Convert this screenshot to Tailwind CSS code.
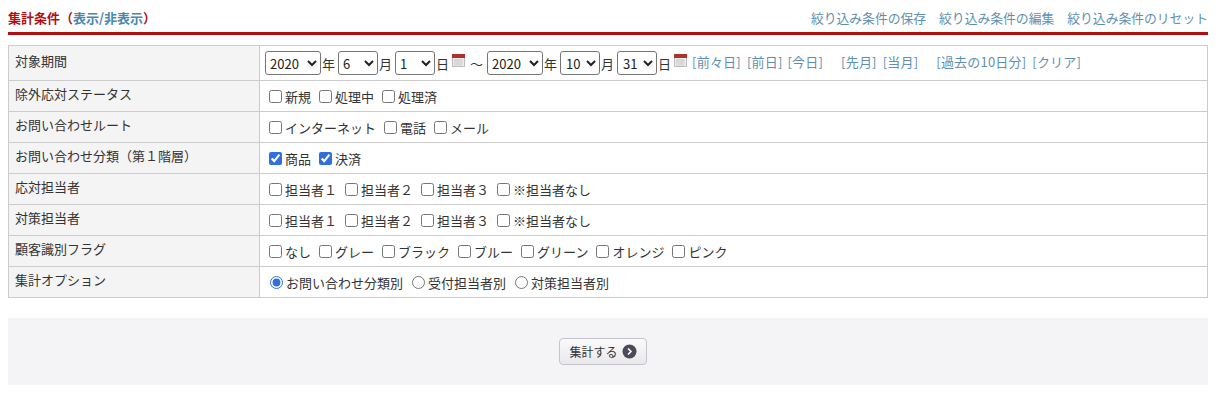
<!DOCTYPE html>
<html lang="ja">
<head>
    <meta charset="UTF-8">
    <title>集計条件</title>
    <script src="https://cdn.jsdelivr.net/npm/@tailwindcss/browser@4"></script>
</head>
<body class="bg-white text-[#333] text-[13px] leading-[19px] font-['Noto_Sans_CJK_JP','Noto_Sans',sans-serif]">
    <div class="ml-2 w-[1200px] pt-[8px]">
        <!-- header -->
        <div class="flex justify-between items-start h-[24px] border-b-[3px] border-[#b01010] box-content">
            <h2 class="font-bold text-[#b01010] text-[13px]">集計条件（<a class="text-[#4a86ad]">表示/非表示</a>）</h2>
            <div class="flex gap-[13px] text-[#5f8fb0] text-[12.8px]">
                <a>絞り込み条件の保存</a>
                <a>絞り込み条件の編集</a>
                <a>絞り込み条件のリセット</a>
            </div>
        </div>

        <table class="mt-[10px] w-[1200px] table-fixed border-collapse">
            <tbody>
                <tr class="h-[35px]">
                    <th class="w-[251px] border border-[#ccc] bg-[#f4f4f4] font-normal text-left px-[6px] align-top pt-[5px]">対象期間</th>
                    <td class="border border-[#ccc] px-[5px]">
                        <div class="flex items-center whitespace-nowrap">
                            <span class="relative inline-flex">
                                <select class="appearance-none border border-[#767676] rounded-[3px] w-[56px] h-[24px] pl-[4px] bg-white text-[#222]"><option>2020</option></select>
                                <svg class="absolute right-[4px] top-[8px] w-[10px] h-[8px]" viewBox="0 0 10 8"><path d="M1 2l4 4 4-4" fill="none" stroke="#222" stroke-width="2"/></svg>
                            </span>
                            <span class="ml-[1px]">年</span>
                            <span class="relative inline-flex ml-[3px]">
                                <select class="appearance-none border border-[#767676] rounded-[3px] w-[40px] h-[24px] pl-[4px] bg-white text-[#222]"><option>6</option></select>
                                <svg class="absolute right-[4px] top-[8px] w-[10px] h-[8px]" viewBox="0 0 10 8"><path d="M1 2l4 4 4-4" fill="none" stroke="#222" stroke-width="2"/></svg>
                            </span>
                            <span class="ml-[1px]">月</span>
                            <span class="relative inline-flex ml-[3px]">
                                <select class="appearance-none border border-[#767676] rounded-[3px] w-[40px] h-[24px] pl-[4px] bg-white text-[#222]"><option>1</option></select>
                                <svg class="absolute right-[4px] top-[8px] w-[10px] h-[8px]" viewBox="0 0 10 8"><path d="M1 2l4 4 4-4" fill="none" stroke="#222" stroke-width="2"/></svg>
                            </span>
                            <span class="ml-[1px]">日</span>
                            <svg class="ml-[3px] mb-[5px] w-[13px] h-[13px]" viewBox="0 0 13 13"><rect x="0.5" y="0.5" width="12" height="12" fill="#eee" stroke="#bbb"/><rect width="13" height="4" fill="#b03030"/><path d="M2 6h9M2 8h9M2 10h9M3 5v7M5 5v7M7 5v7M9 5v7" stroke="#c4c4c4" stroke-width="0.6"/></svg>
                            <span class="ml-[5px] mr-[4px]">～</span>
                            <span class="relative inline-flex">
                                <select class="appearance-none border border-[#767676] rounded-[3px] w-[56px] h-[24px] pl-[4px] bg-white text-[#222]"><option>2020</option></select>
                                <svg class="absolute right-[4px] top-[8px] w-[10px] h-[8px]" viewBox="0 0 10 8"><path d="M1 2l4 4 4-4" fill="none" stroke="#222" stroke-width="2"/></svg>
                            </span>
                            <span class="ml-[1px]">年</span>
                            <span class="relative inline-flex ml-[3px]">
                                <select class="appearance-none border border-[#767676] rounded-[3px] w-[40px] h-[24px] pl-[5px] bg-white text-[#222]"><option>10</option></select>
                                <svg class="absolute right-[4px] top-[8px] w-[10px] h-[8px]" viewBox="0 0 10 8"><path d="M1 2l4 4 4-4" fill="none" stroke="#222" stroke-width="2"/></svg>
                            </span>
                            <span class="ml-[1px]">月</span>
                            <span class="relative inline-flex ml-[3px]">
                                <select class="appearance-none border border-[#767676] rounded-[3px] w-[40px] h-[24px] pl-[5px] bg-white text-[#222]"><option>31</option></select>
                                <svg class="absolute right-[4px] top-[8px] w-[10px] h-[8px]" viewBox="0 0 10 8"><path d="M1 2l4 4 4-4" fill="none" stroke="#222" stroke-width="2"/></svg>
                            </span>
                            <span class="ml-[1px]">日</span>
                            <svg class="ml-[3px] mb-[5px] w-[13px] h-[13px]" viewBox="0 0 13 13"><rect x="0.5" y="0.5" width="12" height="12" fill="#eee" stroke="#bbb"/><rect width="13" height="4" fill="#b03030"/><path d="M2 6h9M2 8h9M2 10h9M3 5v7M5 5v7M7 5v7M9 5v7" stroke="#c4c4c4" stroke-width="0.6"/></svg>
                            <div class="flex text-[#5f8fb0] ml-[5px] tracking-[0.2px] -mt-[4px]">
                                <a>[前々日]</a>
                                <a class="ml-[6px]">[前日]</a>
                                <a class="ml-[5px]">[今日]</a>
                                <a class="ml-[18px]">[先月]</a>
                                <a class="ml-[6px]">[当月]</a>
                                <a class="ml-[18px]">[過去の10日分]</a>
                                <a class="ml-[6px]">[クリア]</a>
                            </div>
                        </div>
                    </td>
                </tr>
                <tr class="h-[31px]">
                    <th class="border border-[#ccc] bg-[#f4f4f4] font-normal text-left px-[6px] align-top pt-[3px]">除外応対ステータス</th>
                    <td class="border border-[#ccc] px-[9px]">
                        <div class="flex gap-[8px]">
                            <label class="flex items-center gap-[3px]"><input type="checkbox" class="m-0">新規</label>
                            <label class="flex items-center gap-[3px]"><input type="checkbox" class="m-0">処理中</label>
                            <label class="flex items-center gap-[3px]"><input type="checkbox" class="m-0">処理済</label>
                        </div>
                    </td>
                </tr>
                <tr class="h-[31px]">
                    <th class="border border-[#ccc] bg-[#f4f4f4] font-normal text-left px-[6px] align-top pt-[3px]">お問い合わせルート</th>
                    <td class="border border-[#ccc] px-[9px]">
                        <div class="flex gap-[8px]">
                            <label class="flex items-center gap-[3px]"><input type="checkbox" class="m-0">インターネット</label>
                            <label class="flex items-center gap-[3px]"><input type="checkbox" class="m-0">電話</label>
                            <label class="flex items-center gap-[3px]"><input type="checkbox" class="m-0">メール</label>
                        </div>
                    </td>
                </tr>
                <tr class="h-[31px]">
                    <th class="border border-[#ccc] bg-[#f4f4f4] font-normal text-left px-[6px] align-top pt-[3px]">お問い合わせ分類（第１階層）</th>
                    <td class="border border-[#ccc] px-[9px]">
                        <div class="flex gap-[8px]">
                            <label class="flex items-center gap-[3px]"><input type="checkbox" checked class="m-0 accent-[#2f6fe0]">商品</label>
                            <label class="flex items-center gap-[3px]"><input type="checkbox" checked class="m-0 accent-[#2f6fe0]">決済</label>
                        </div>
                    </td>
                </tr>
                <tr class="h-[31px]">
                    <th class="border border-[#ccc] bg-[#f4f4f4] font-normal text-left px-[6px] align-top pt-[3px]">応対担当者</th>
                    <td class="border border-[#ccc] px-[9px]">
                        <div class="flex gap-[8px]">
                            <label class="flex items-center gap-[3px]"><input type="checkbox" class="m-0">担当者１</label>
                            <label class="flex items-center gap-[3px]"><input type="checkbox" class="m-0">担当者２</label>
                            <label class="flex items-center gap-[3px]"><input type="checkbox" class="m-0">担当者３</label>
                            <label class="flex items-center gap-[3px]"><input type="checkbox" class="m-0">※担当者なし</label>
                        </div>
                    </td>
                </tr>
                <tr class="h-[31px]">
                    <th class="border border-[#ccc] bg-[#f4f4f4] font-normal text-left px-[6px] align-top pt-[3px]">対策担当者</th>
                    <td class="border border-[#ccc] px-[9px]">
                        <div class="flex gap-[8px]">
                            <label class="flex items-center gap-[3px]"><input type="checkbox" class="m-0">担当者１</label>
                            <label class="flex items-center gap-[3px]"><input type="checkbox" class="m-0">担当者２</label>
                            <label class="flex items-center gap-[3px]"><input type="checkbox" class="m-0">担当者３</label>
                            <label class="flex items-center gap-[3px]"><input type="checkbox" class="m-0">※担当者なし</label>
                        </div>
                    </td>
                </tr>
                <tr class="h-[31px]">
                    <th class="border border-[#ccc] bg-[#f4f4f4] font-normal text-left px-[6px] align-top pt-[3px]">顧客識別フラグ</th>
                    <td class="border border-[#ccc] px-[9px]">
                        <div class="flex gap-[8px]">
                            <label class="flex items-center gap-[3px]"><input type="checkbox" class="m-0">なし</label>
                            <label class="flex items-center gap-[3px]"><input type="checkbox" class="m-0">グレー</label>
                            <label class="flex items-center gap-[3px]"><input type="checkbox" class="m-0">ブラック</label>
                            <label class="flex items-center gap-[3px]"><input type="checkbox" class="m-0">ブルー</label>
                            <label class="flex items-center gap-[3px]"><input type="checkbox" class="m-0">グリーン</label>
                            <label class="flex items-center gap-[3px]"><input type="checkbox" class="m-0">オレンジ</label>
                            <label class="flex items-center gap-[3px]"><input type="checkbox" class="m-0">ピンク</label>
                        </div>
                    </td>
                </tr>
                <tr class="h-[31px]">
                    <th class="border border-[#ccc] bg-[#f4f4f4] font-normal text-left px-[6px] align-top pt-[3px]">集計オプション</th>
                    <td class="border border-[#ccc] px-[9px]">
                        <div class="flex gap-[9px]">
                            <label class="flex items-center gap-[3px]"><input type="radio" name="opt" checked class="m-0 ml-[1px] accent-[#2f6fe0]">お問い合わせ分類別</label>
                            <label class="flex items-center gap-[3px]"><input type="radio" name="opt" class="m-0">受付担当者別</label>
                            <label class="flex items-center gap-[3px]"><input type="radio" name="opt" class="m-0">対策担当者別</label>
                        </div>
                    </td>
                </tr>
            </tbody>
        </table>

        <div class="mt-[20px] h-[67px] bg-[#f4f4f6] flex items-center justify-center pr-[10px]">
            <button class="w-[88px] h-[27px] flex items-center justify-center gap-[4px] border border-[#c4c4cc] rounded-[4px] bg-gradient-to-b from-[#fafafa] to-[#e9e9ec] text-[#333] text-[12px]">
                集計する
                <svg class="w-[15px] h-[15px]" viewBox="0 0 15 15"><circle cx="7.5" cy="7.5" r="7" fill="#4a4a58"/><path d="M6 4.5l3 3-3 3" fill="none" stroke="#fff" stroke-width="1.6"/></svg>
            </button>
        </div>
    </div>
</body>
</html>
